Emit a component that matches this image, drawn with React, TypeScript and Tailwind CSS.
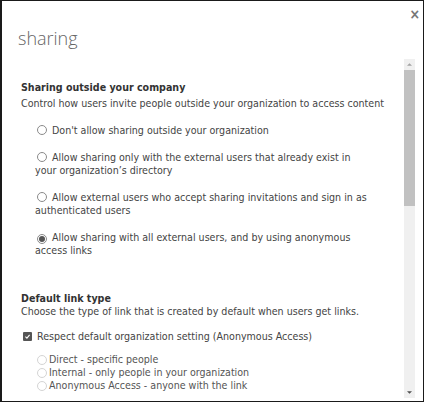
import React from 'react';

const OPTIONS = [
  { text: "Don't allow sharing outside your organization", checked: false },
  { text: 'Allow sharing only with the external users that already exist in your organization\u2019s directory', checked: false },
  { text: 'Allow external users who accept sharing invitations and sign in as authenticated users', checked: false },
  { text: 'Allow sharing with all external users, and by using anonymous access links', checked: true },
];

const LINK_TYPES = [
  'Direct - specific people',
  'Internal - only people in your organization',
  'Anonymous Access - anyone with the link',
];

function Radio({ checked, disabled }: { checked?: boolean; disabled?: boolean }) {
  return (
    <span
      className={
        'inline-flex items-center justify-center w-[10px] h-[10px] rounded-full border align-[-1px] bg-white ' +
        (disabled ? 'border-[#d4d4d4] bg-[#f4f4f4]' : 'border-[#8a8a8a]')
      }
    >
      {checked && <span className="w-[6px] h-[6px] rounded-full bg-[#555]" />}
    </span>
  );
}

export default function App() {
  return (
    <div
      className="relative w-[424px] h-[402px] bg-white border border-l-2 border-[#1a1a1a] overflow-hidden text-[#444]"
      style={{ fontFamily: '"DejaVu Sans Condensed", "DejaVu Sans", Verdana, sans-serif' }}
    >
      {/* Close */}
      <button className="absolute right-[3px] top-[6px] text-[#777] text-[14px] font-bold leading-none">×</button>

      <div className="pl-[16px] pt-[28px] h-[58px]">
        <h1
          className="text-[18px] font-light text-[#666] leading-none"
          style={{ fontFamily: '"Open Sans", sans-serif' }}
        >
          sharing
        </h1>
      </div>

      <div className="flex h-[339px]">
        <div className="flex-1 overflow-hidden pl-[19px] pr-[4px] text-[10.6px] leading-[13px]">
          <div className="pt-[22px] font-bold text-[#333] text-[10.6px]">Sharing outside your company</div>
          <div className="mt-[3px] whitespace-nowrap">Control how users invite people outside your organization to access content</div>

          <div className="pl-[14px] pr-[28px] mt-[14px] flex flex-col gap-[14px]">
            {OPTIONS.map((o) => (
              <p key={o.text}>
                <span className="ml-[2px] mr-[5px]">
                  <Radio checked={o.checked} />
                </span>
                {o.text}
              </p>
            ))}
          </div>

          <div className="mt-[35px] font-bold text-[#333] text-[10.6px]">Default link type</div>
          <div className="whitespace-nowrap">Choose the type of link that is created by default when users get links.</div>

          <label className="flex items-center gap-[5px] mt-[12px] ml-[2px]">
            <span className="w-[9px] h-[9px] bg-[#555] rounded-[1px] flex items-center justify-center">
              <svg viewBox="0 0 10 10" className="w-[7px] h-[7px]">
                <path d="M2 5.2 L4.2 7.3 L8 2.8" stroke="white" strokeWidth="1.6" fill="none" />
              </svg>
            </span>
            Respect default organization setting (Anonymous Access)
          </label>

          <div className="mt-[10px] ml-[16px] flex flex-col text-[#555]">
            {LINK_TYPES.map((t) => (
              <div key={t} className="flex items-center gap-[2px]">
                <Radio disabled />
                {t}
              </div>
            ))}
          </div>
        </div>

        {/* Scrollbar */}
        <div className="w-[11px] h-full bg-[#f0f0f0] flex flex-col items-center mr-[8px]">
          <div className="h-[11px] flex items-center justify-center">
            <svg viewBox="0 0 6 3" className="w-[5px] h-[3px]"><path d="M0 3 L3 0 L6 3Z" fill="#a3a3a3" /></svg>
          </div>
          <div className="w-full h-[136px] bg-[#c1c1c1]" />
          <div className="flex-1" />
          <div className="h-[11px] flex items-center justify-center">
            <svg viewBox="0 0 6 3" className="w-[5px] h-[3px]"><path d="M0 0 L6 0 L3 3Z" fill="#505050" /></svg>
          </div>
        </div>
      </div>
    </div>
  );
}
